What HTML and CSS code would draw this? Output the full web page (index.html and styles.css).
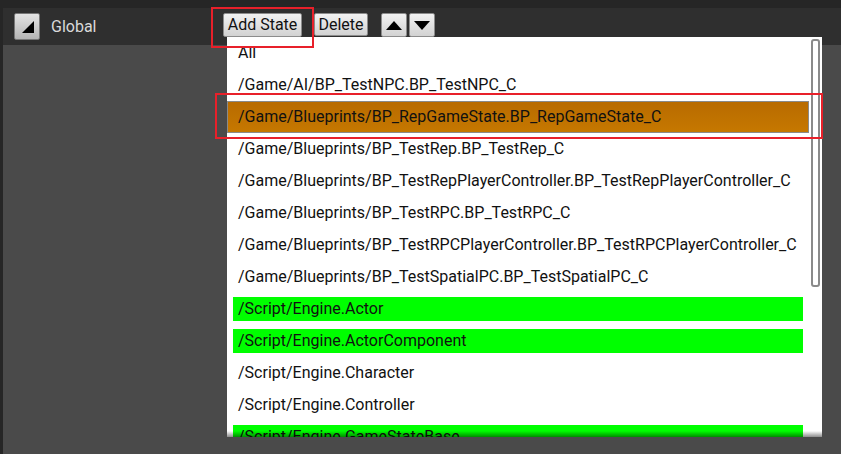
FILE: index.html
```html
<!DOCTYPE html>
<html>
<head>
<meta charset="utf-8">
<link rel="stylesheet" href="styles.css">
</head>
<body>
<div class="page">
  <div class="header">
    <button class="collapse" aria-label="collapse"><svg width="12" height="12" viewBox="0 0 12 12"><polygon points="0,12 12,12 12,0" fill="#000"/></svg></button>
    <span class="title">Global</span>
    <div class="tools">
      <button class="btn add">Add State</button>
      <button class="btn del">Delete</button>
      <div class="arrows">
        <button class="btn arrow"><svg width="16" height="9" viewBox="0 0 16 9"><polygon points="0,9 16,9 8,0" fill="#000"/></svg></button>
        <button class="btn arrow"><svg width="16" height="9" viewBox="0 0 16 9"><polygon points="0,0 16,0 8,9" fill="#000"/></svg></button>
      </div>
    </div>
  </div>
  <div class="body"></div>

  <div class="dropdown">
    <ul class="list">
      <li class="item">All</li>
      <li class="item">/Game/AI/BP_TestNPC.BP_TestNPC_C</li>
      <li class="item selected">/Game/Blueprints/BP_RepGameState.BP_RepGameState_C</li>
      <li class="item">/Game/Blueprints/BP_TestRep.BP_TestRep_C</li>
      <li class="item">/Game/Blueprints/BP_TestRepPlayerController.BP_TestRepPlayerController_C</li>
      <li class="item">/Game/Blueprints/BP_TestRPC.BP_TestRPC_C</li>
      <li class="item">/Game/Blueprints/BP_TestRPCPlayerController.BP_TestRPCPlayerController_C</li>
      <li class="item">/Game/Blueprints/BP_TestSpatialPC.BP_TestSpatialPC_C</li>
      <li class="item"><span class="mark">/Script/Engine.Actor</span></li>
      <li class="item"><span class="mark">/Script/Engine.ActorComponent</span></li>
      <li class="item">/Script/Engine.Character</li>
      <li class="item">/Script/Engine.Controller</li>
      <li class="item"><span class="mark">/Script/Engine.GameStateBase</span></li>
    </ul>
    <div class="scrollbar"></div>
    <div class="fade"></div>
  </div>

  <div class="annot annot-add"></div>
  <div class="annot annot-row"></div>
</div>
</body>
</html>
```
FILE: styles.css
```css
* { box-sizing: border-box; }
html, body { margin: 0; padding: 0; }
body {
  background: #262626;
  font-family: Roboto, "Liberation Sans", sans-serif;
  font-size: 16px;
  width: 841px;
  height: 454px;
  overflow: hidden;
}
.page {
  position: relative;
  width: 841px;
  height: 454px;
  padding: 8px 0 0 3px;
  display: flex;
  flex-direction: column;
}
.header {
  height: 37px;
  background: #2f2f2f;
  display: flex;
  align-items: flex-start;
  padding: 5px 0 0 11px;
}
.collapse {
  width: 26px;
  height: 27px;
  padding: 0 0 6px 7px;
  margin: 0;
  border: 1px solid #777;
  border-radius: 2px;
  background: linear-gradient(#e4e4e4, #b4b4b4);
  display: flex;
  align-items: flex-end;
  justify-content: flex-start;
}
.title {
  color: #dadada;
  margin-left: 11px;
  width: 172px;
  line-height: 27px;
}
.tools {
  display: flex;
  align-items: flex-start;
}
.btn {
  font-family: Roboto, "Liberation Sans", sans-serif;
  font-size: 16px;
  color: #111;
  height: 24px;
  margin: 0;
  padding: 0;
  border: 1px solid #8c8c8c;
  border-radius: 2px;
  background: linear-gradient(#f2f2f2, #d2d2d2);
  line-height: 22px;
  white-space: nowrap;
  text-align: center;
}
.add { width: 79px; }
.del { width: 54px; margin-left: 12px; height: 23px; }
.arrows { display: flex; gap: 2px; margin-left: 13px; }
.arrow {
  width: 26px;
  height: 24px;
  display: flex;
  align-items: center;
  justify-content: center;
}
.body {
  flex: 1;
  background: #4a4a4a;
}
.dropdown {
  position: absolute;
  left: 227px;
  top: 37px;
  width: 595px;
  height: 400px;
  background: #fff;
  overflow: hidden;
  display: flex;
}
.list {
  list-style: none;
  margin: 0;
  padding: 0;
  width: 582px;
}
.item {
  height: 32px;
  line-height: 32px;
  padding-left: 11px;
  color: #111;
  white-space: nowrap;
}
.item.selected {
  background: linear-gradient(#b86b00, #c67800);
  border: 1px solid #8a8a8a;
  line-height: 30px;
  padding-left: 10px;
  height: 32px;
}
.item:has(.mark) { padding: 4px 6px; line-height: 24px; }
.mark {
  display: block;
  background: #00ff00;
  height: 24px;
  padding-left: 5px;
}
.scrollbar {
  margin: 2px 0 0 2px;
  width: 9px;
  height: 248px;
  border: 2px solid #8a8a8a;
  border-radius: 3px;
}
.fade {
  position: absolute;
  left: 0;
  right: 0;
  bottom: 0;
  height: 6px;
  background: linear-gradient(rgba(0,0,0,0), rgba(0,0,0,0.45));
}
.annot {
  position: absolute;
  border: 2px solid #e8202a;
}
.annot-add { left: 211px; top: 7px; width: 103px; height: 41px; }
.annot-row { left: 215px; top: 93px; width: 608px; height: 46px; }
```
